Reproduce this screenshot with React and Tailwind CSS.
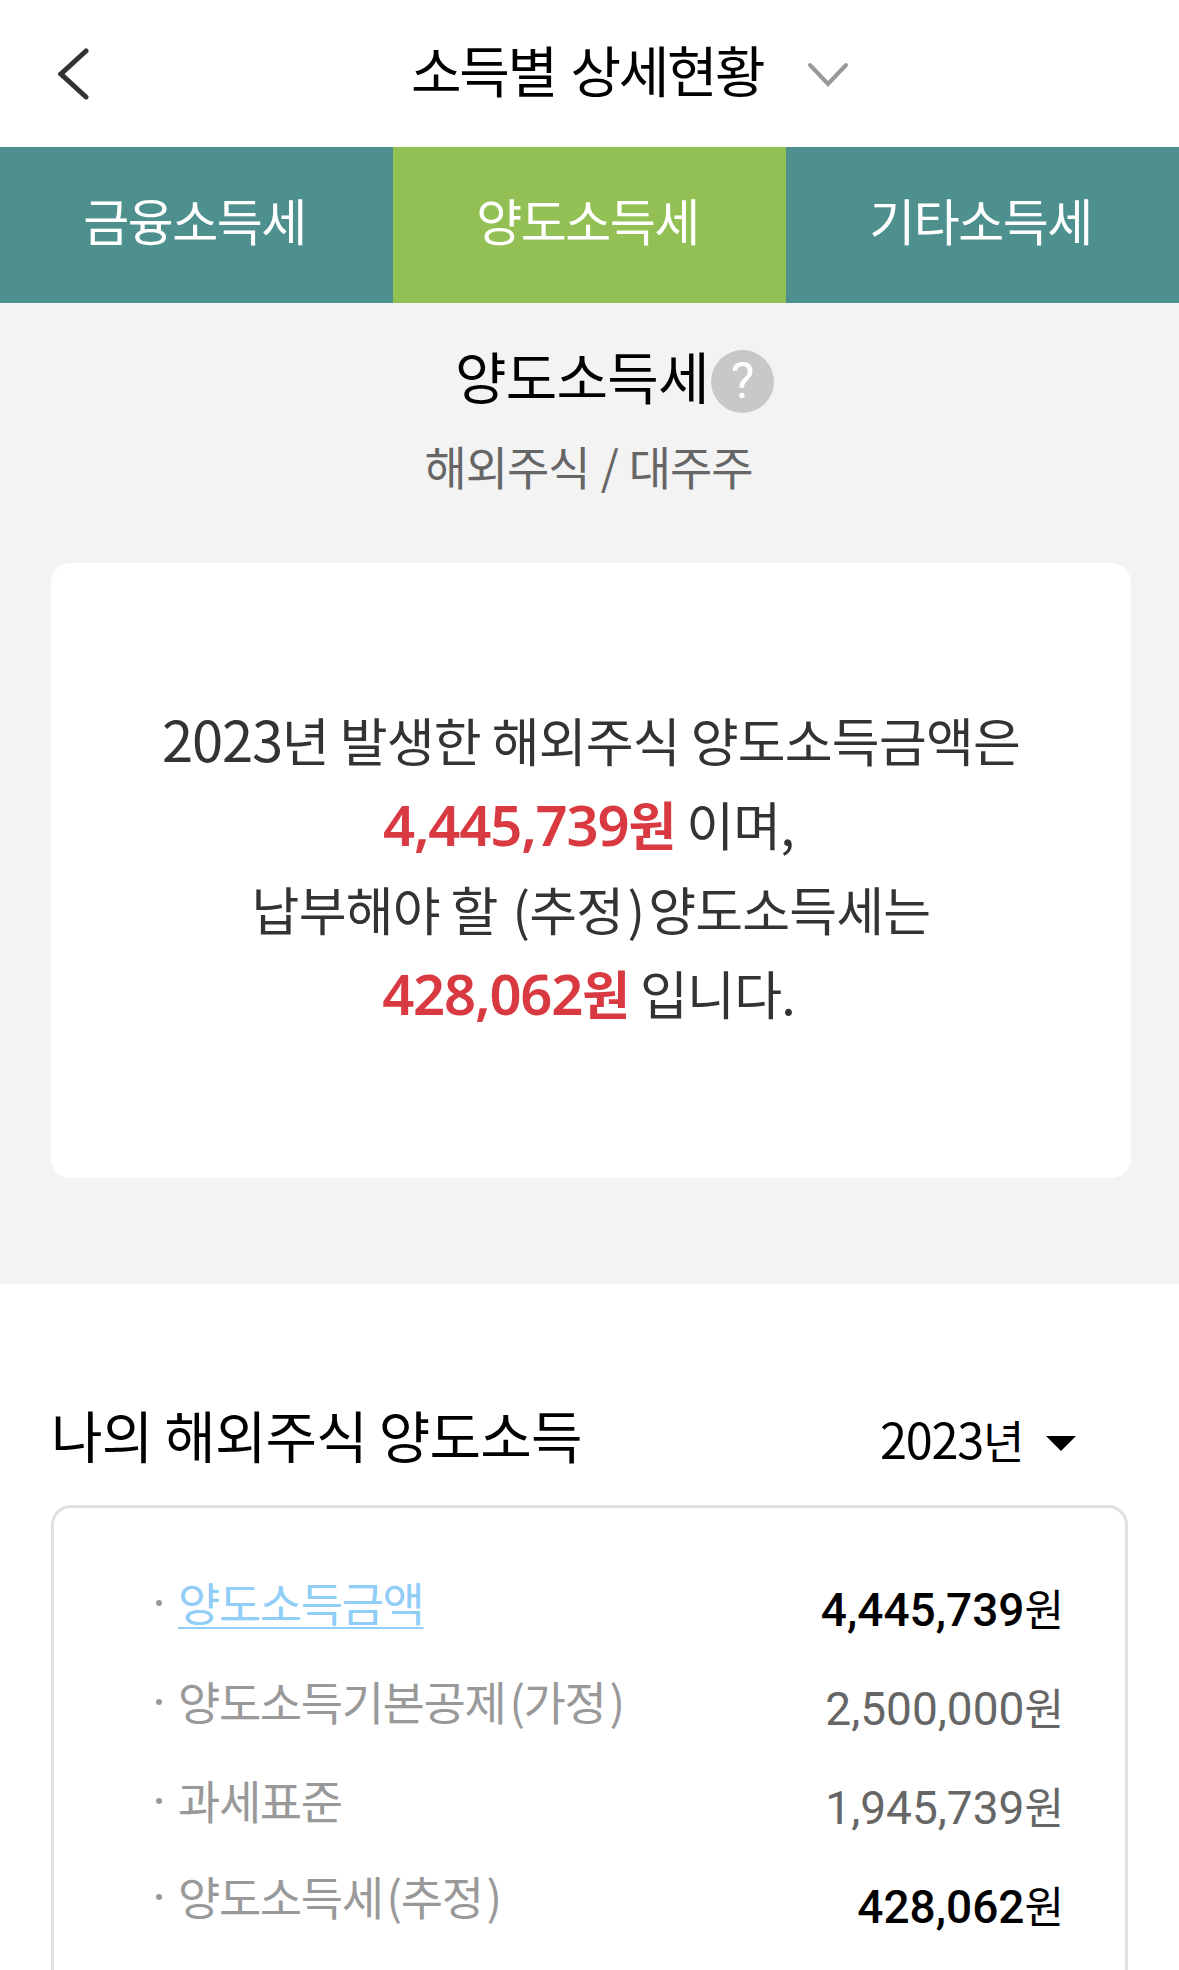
const TABS = ['금융소득세', '양도소득세', '기타소득세']

const ROWS = [
  { label: '양도소득금액', amount: '4,445,739', link: true, strong: true },
  { label: '양도소득기본공제(가정)', amount: '2,500,000' },
  { label: '과세표준', amount: '1,945,739' },
  { label: '양도소득세(추정)', amount: '428,062', strong: true },
]

// digits run slightly larger than the hangul next to them
function Num({ children }) {
  return <span className="text-[1.08em] leading-none tracking-[-1.2px]">{children}</span>
}

function Amount({ children }) {
  return (
    <b className="text-[#d93a41]">
      <span className="font-['Noto_Sans',sans-serif] font-semibold text-[1.08em] leading-none tracking-[-1.2px]">{children}</span>원
    </b>
  )
}

function Paren({ children }) {
  return (
    <>
      <span className="ml-[4px]">(</span>{children}<span className="ml-[4px] mr-[4px]">)</span>
    </>
  )
}

function Label({ text }) {
  const [name, note] = text.replace(')', '').split('(')
  return <>{name}{note && <Paren>{note}</Paren>}</>
}

function Header() {
  return (
    <header className="h-[147px] bg-white flex items-center">
      <svg className="ml-[58px] w-[31px] h-[52px]" viewBox="0 0 31 52" fill="none" stroke="#333" strokeWidth="5" strokeLinecap="round">
        <path d="M28 3L3 26L28 49" />
      </svg>
      <h1 className="ml-[322px] pb-[10px] text-[55px] leading-none tracking-[-2.4px] [word-spacing:5px] text-black">소득별 상세현황</h1>
      <svg className="ml-[44px] mt-[3px] w-[42px] h-[26px]" viewBox="0 0 42 26" fill="none" stroke="#999" strokeWidth="4" strokeLinecap="round">
        <path d="M3 3L21 22L39 3" />
      </svg>
    </header>
  )
}

export default function App() {
  return (
    <div className="w-[1179px] h-[1970px] overflow-hidden bg-white font-['Noto_Sans_CJK_KR',sans-serif]">
      <Header />
      <nav className="grid grid-cols-3 h-[156px]">
        {TABS.map((tab, i) => (
          <button key={tab} className={`pb-[12px] pr-[4px] text-[50px] tracking-[-1.5px] text-white ${i === 1 ? 'bg-[#93c054]' : 'bg-[#4e908e]'}`}>
            {tab}
          </button>
        ))}
      </nav>

      <section className="h-[981px] bg-[#f3f3f3] pt-[42px] px-[51px]">
        <div className="flex items-start ml-[404px]">
          <h2 className="text-[56px] tracking-[-0.8px] leading-[60px] w-[256px] whitespace-nowrap text-black">양도소득세</h2>
          <span className="mt-[5px] w-[63px] h-[63px] rounded-full bg-[#c8c8c8] text-white font-[Roboto,sans-serif] text-[50px] leading-[63px] text-center">?</span>
        </div>
        <p className="mt-[22px] pr-[2px] text-center text-[46px] leading-[60px] tracking-[-1.1px] [word-spacing:2px] text-[#666]">해외주식 / 대주주</p>
        <div className="mt-[68px] w-[1080px] h-[615px] rounded-[20px] bg-white pt-[135px] text-center text-[52px] leading-[84.4px] tracking-[-0.8px] text-[#333]">
          <p><Num>2023</Num>년 발생한 해외주식 양도소득금액은</p>
          <p className="pr-[5px]"><Amount>4,445,739</Amount> 이며,</p>
          <p>납부해야 할 <Paren>추정</Paren>양도소득세는</p>
          <p className="pr-[5px]"><Amount>428,062</Amount> 입니다.</p>
        </div>
      </section>

      <section className="pt-[120px] px-[51px]">
        <div className="flex items-start justify-between h-[101px] pr-[52px]">
          <h2 className="text-[56px] leading-[60px] tracking-[-0.8px] text-black">나의 해외주식 양도소득</h2>
          <button className="mt-[6px] flex items-center gap-[22px] text-[45px] leading-[60px] tracking-[-0.5px] text-black">
            <span><Num>2023</Num>년</span>
            <svg className="mt-[6px] w-[30px] h-[15px]" viewBox="0 0 30 15"><path d="M0 0H30L15 15Z" /></svg>
          </button>
        </div>
        <ul className="w-[1077px] h-[600px] rounded-[20px] border-3 border-[#e0e0e0] pt-[62px] pl-[102px] pr-[61px]">
          {ROWS.map((row) => (
            <li key={row.label} className="group flex items-start h-[99px] text-[46px] leading-[64px]">
              <span className="mt-[30px] w-[6px] h-[6px] rounded-full bg-[#999] group-last:mt-[27px]" />
              <span className={`ml-[16px] -mt-px tracking-[-1.4px] group-last:-mt-[4px] ${row.link ? 'text-[#90cdf7]' : 'text-[#999]'}`}>
                {row.link
                  ? <a className="underline decoration-2 underline-offset-[6px]">{row.label}</a>
                  : <Label text={row.label} />}
              </span>
              <span className={`ml-auto mt-[8px] font-[Roboto,'Noto_Sans_CJK_KR',sans-serif] ${row.strong ? 'font-medium text-black' : 'text-[#666]'}`}>
                {row.amount}<span className="text-[43px] leading-none font-normal">원</span>
              </span>
            </li>
          ))}
        </ul>
      </section>
    </div>
  )
}
